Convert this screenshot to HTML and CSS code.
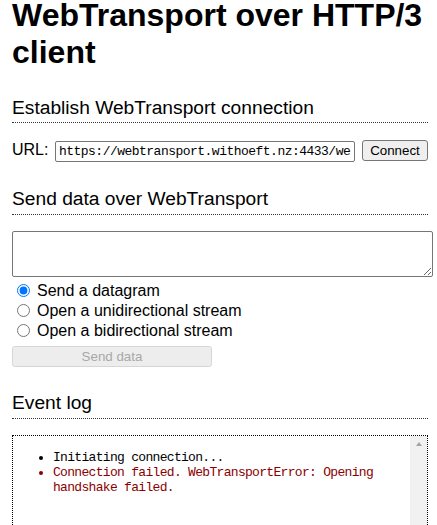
FILE: index.html
```html
<!DOCTYPE html>
<html lang="en">
<head>
<meta charset="utf-8">
<title>WebTransport over HTTP/3 client</title>
<link rel="stylesheet" href="styles.css">
</head>
<body>
<div class="tool">
  <h1>WebTransport over HTTP/3 client</h1>

  <h2>Establish WebTransport connection</h2>
  <div class="url-row">
    <label class="url-label" for="url">URL:</label>
    <input class="url-input" id="url" type="text" value="https://webtransport.withoeft.nz:4433/webtransport">
    <button class="btn" type="button">Connect</button>
  </div>

  <h2>Send data over WebTransport</h2>
  <textarea class="data" aria-label="Data"></textarea>
  <div class="options">
    <label class="option"><input class="radio" type="radio" name="sendtype" checked>Send a datagram</label>
    <label class="option"><input class="radio" type="radio" name="sendtype">Open a unidirectional stream</label>
    <label class="option"><input class="radio" type="radio" name="sendtype">Open a bidirectional stream</label>
  </div>
  <button class="btn btn-send" type="button" disabled>Send data</button>

  <h2>Event log</h2>
  <div class="log">
    <ul class="log-list">
      <li>Initiating connection...</li>
      <li class="log-error">Connection failed. WebTransportError: Opening handshake failed.</li>
    </ul>
    <div class="scrollbar"><span class="arrow"></span></div>
  </div>
</div>
</body>
</html>
```

FILE: styles.css
```css
html, body {
  margin: 0;
  padding: 0;
  background: #fff;
}

body {
  font-family: "Liberation Sans", Arial, sans-serif;
  font-size: 16px;
  color: #000;
  overflow: hidden;
  accent-color: #0075ff;
}

.tool {
  width: 416px;
  margin-left: 12px;
}

h1 {
  margin: -3px 0 0;
  font-size: 32px;
  line-height: 37px;
  font-weight: bold;
}

h2 {
  margin: 16px 0;
  padding: 9.6px 0 3.8px;
  font-size: 19.2px;
  line-height: 22px;
  font-weight: normal;
  border-bottom: 1px dotted #333;
}

.url-row {
  display: flex;
  align-items: baseline;
  height: 22px;
  padding-top: 1px;
}

.url-label {
  font-size: 16px;
}

.url-input {
  box-sizing: border-box;
  width: 300px;
  height: 21px;
  margin: 0 0 0 6.5px;
  padding: 1px 3px;
  border: 1px solid #767676;
  border-radius: 2px;
  font-family: "Liberation Mono", "DejaVu Sans Mono", monospace;
  font-size: 13px;
  letter-spacing: -0.52px;
  color: #000;
  background: #fff;
}

.btn {
  box-sizing: border-box;
  height: 21px;
  margin: 0 0 0 7px;
  padding: 0 6px;
  width: 66px;
  border: 1px solid #767676;
  border-radius: 3px;
  background: #efefef;
  font-family: "Liberation Sans", Arial, sans-serif;
  font-size: 13.33px;
  color: #000;
}

.data {
  display: block;
  box-sizing: border-box;
  width: 421px;
  height: 46px;
  margin: 0;
  border: 1px solid #767676;
  border-radius: 2px;
  padding: 2px;
  font-family: "Liberation Mono", monospace;
  font-size: 13px;
}

.options {
  margin-top: 4px;
}

.option {
  display: flex;
  align-items: center;
  height: 20px;
  font-size: 16px;
  line-height: 20px;
}

.radio {
  width: 13px;
  height: 13px;
  margin: 0 7px 0 5px;
}

.btn-send {
  display: block;
  width: 200px;
  margin: 5px 0 0;
  border-color: #d6d6d6;
  background: #ededed;
  color: #a8a8a8;
}

.log {
  display: flex;
  height: 190px;
  border: 1px dotted #000;
  font-family: "Liberation Mono", "DejaVu Sans Mono", monospace;
  font-size: 13px;
  line-height: 15px;
  letter-spacing: -0.69px;
}

.log-list {
  flex: 1;
  margin: 0;
  padding: 14px 0 13px 40px;
  list-style: disc;
}

.log-error {
  color: #8b0000;
}

.scrollbar {
  width: 17px;
  background: #f1f1f1;
  display: flex;
  justify-content: center;
  align-items: flex-start;
}

.arrow {
  width: 0;
  height: 0;
  margin-top: 6px;
  border-left: 3.5px solid transparent;
  border-right: 3.5px solid transparent;
  border-bottom: 4px solid #a3a3a3;
}
```
